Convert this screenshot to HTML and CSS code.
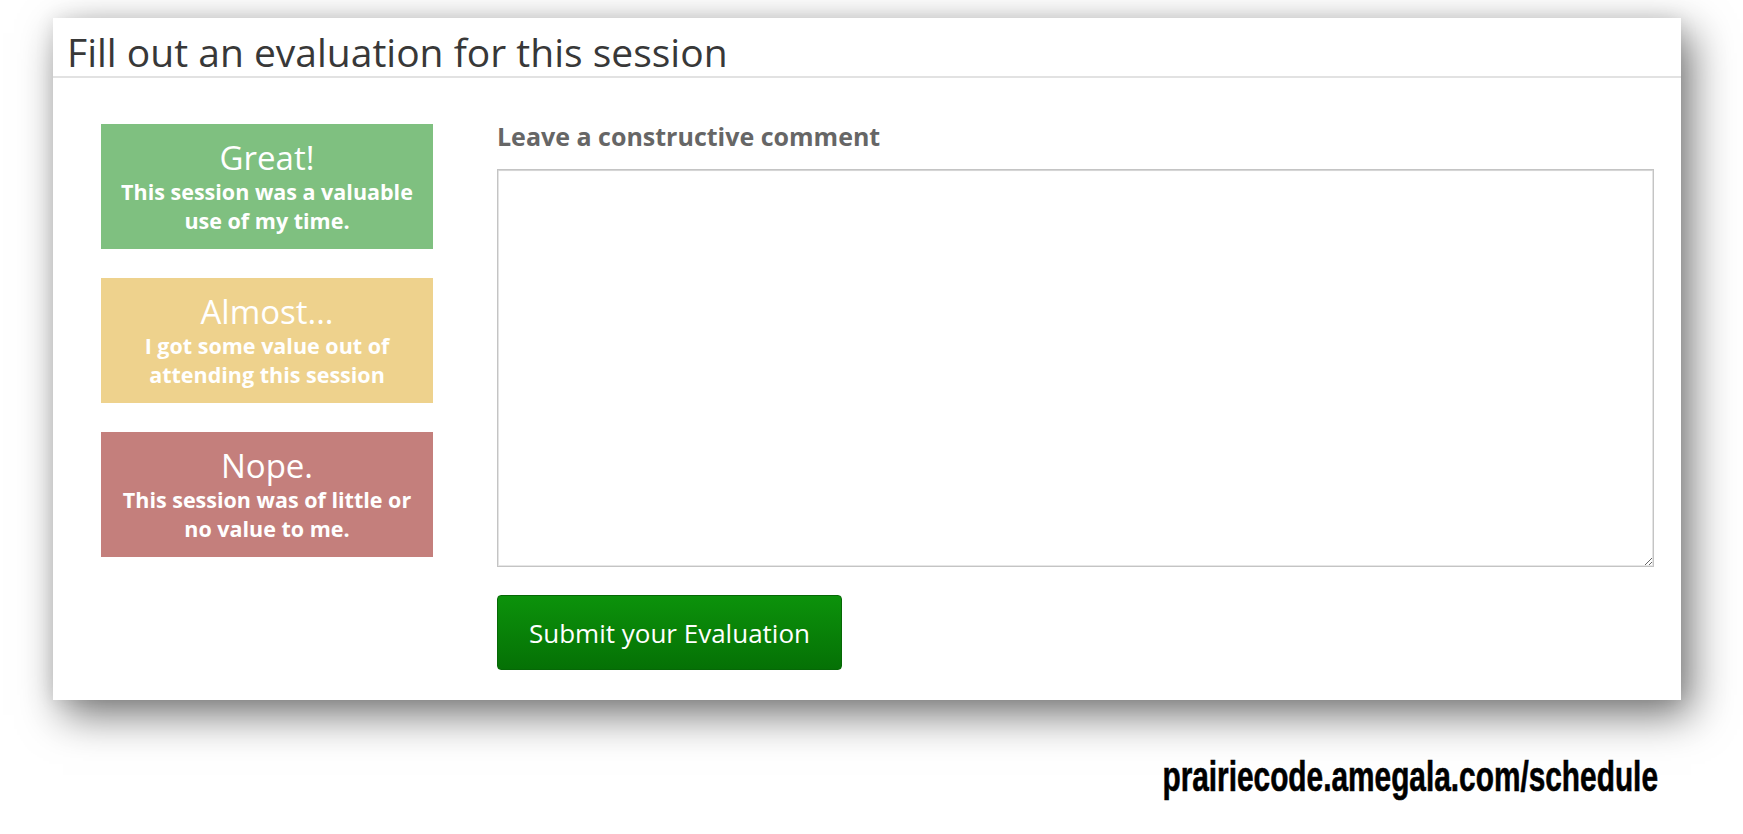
FILE: index.html
```html
<!DOCTYPE html>
<html>
<head>
<meta charset="utf-8">
<title>Session evaluation</title>
<link rel="stylesheet" href="styles.css">
</head>
<body>
<div class="page">
  <section class="card">
    <h2 class="card-title">Fill out an evaluation for this session</h2>
    <div class="card-body">
      <div class="ratings">
        <button class="rating rating-great">
          <span class="rating-title">Great!</span>
          <span class="rating-desc">This session was a valuable use of my time.</span>
        </button>
        <button class="rating rating-almost">
          <span class="rating-title">Almost...</span>
          <span class="rating-desc">I got some value out of attending this session</span>
        </button>
        <button class="rating rating-nope">
          <span class="rating-title">Nope.</span>
          <span class="rating-desc">This session was of little or no value to me.</span>
        </button>
      </div>
      <form class="comment">
        <label class="comment-label" for="comment">Leave a constructive comment</label>
        <textarea id="comment" class="comment-input"></textarea>
        <button type="button" class="submit">Submit your Evaluation</button>
      </form>
    </div>
  </section>
  <div class="url-row"><span class="url">prairiecode.amegala.com/schedule</span></div>
</div>
</body>
</html>
```

FILE: styles.css
```css
html, body {
  margin: 0;
  padding: 0;
  background: #ffffff;
}

body {
  font-family: "Open Sans", "Liberation Sans", sans-serif;
  overflow: hidden;
}

.page {
  padding: 18px 0 0 53px;
}

.card {
  width: 1628px;
  height: 682px;
  background: #ffffff;
  box-shadow: 10px 15px 40px rgba(0, 0, 0, 0.55), 0 0 18px rgba(0, 0, 0, 0.08);
  display: flex;
  flex-direction: column;
}

.card-title {
  margin: 0;
  padding: 12px 0 3px 14px;
  font-size: 39px;
  line-height: 43px;
  font-weight: 400;
  color: #383838;
  border-bottom: 2px solid #e2e2e2;
}

.card-body {
  display: flex;
  padding: 46px 27px 0 48px;
}

.ratings {
  width: 332px;
  display: flex;
  flex-direction: column;
  gap: 29px;
  flex: none;
}

.rating {
  display: flex;
  flex-direction: column;
  align-items: center;
  height: 125px;
  box-sizing: border-box;
  padding: 15px 12px 0;
  border: none;
  border-radius: 0;
  color: #ffffff;
  font-family: inherit;
  text-align: center;
  cursor: pointer;
}

.rating-great { background: #7fc080; }
.rating-almost { background: #eed28d; }
.rating-nope { background: #c47f7c; }

.rating-title {
  font-size: 33px;
  line-height: 38px;
  font-weight: 400;
}

.rating-desc {
  font-size: 21.5px;
  line-height: 29px;
  font-weight: 700;
}

.comment {
  margin: 0 0 0 64px;
  flex: 1;
  display: flex;
  flex-direction: column;
  align-items: flex-start;
}

.comment-label {
  font-size: 25px;
  line-height: 24px;
  font-weight: 700;
  color: #666666;
  margin-bottom: 21px;
}

.comment-input {
  width: 100%;
  height: 398px;
  box-sizing: border-box;
  margin: 0;
  border: 1px solid #c4c4c4;
  box-shadow: inset 0 1px 1px rgba(0, 0, 0, 0.08), inset 0 0 0 1px #e6e6e6;
  border-radius: 0;
  resize: both;
}

.submit {
  margin-top: 28px;
  height: 75px;
  width: 345px;
  padding: 0;
  border: 1px solid #066806;
  border-radius: 4px;
  background: linear-gradient(#0c920b, #057105);
  color: #ffffff;
  font-family: inherit;
  font-size: 26px;
  font-weight: 400;
  cursor: pointer;
}

.url-row {
  text-align: right;
  padding-right: 85px;
  margin-top: 56px;
  line-height: 42px;
}

.url {
  display: inline-block;
  font-family: "Liberation Sans", Arial, sans-serif;
  font-weight: 700;
  font-size: 42px;
  color: #000000;
  transform: scaleX(0.71);
  transform-origin: right center;
  -webkit-text-stroke: 0.6px #000;
}
```
